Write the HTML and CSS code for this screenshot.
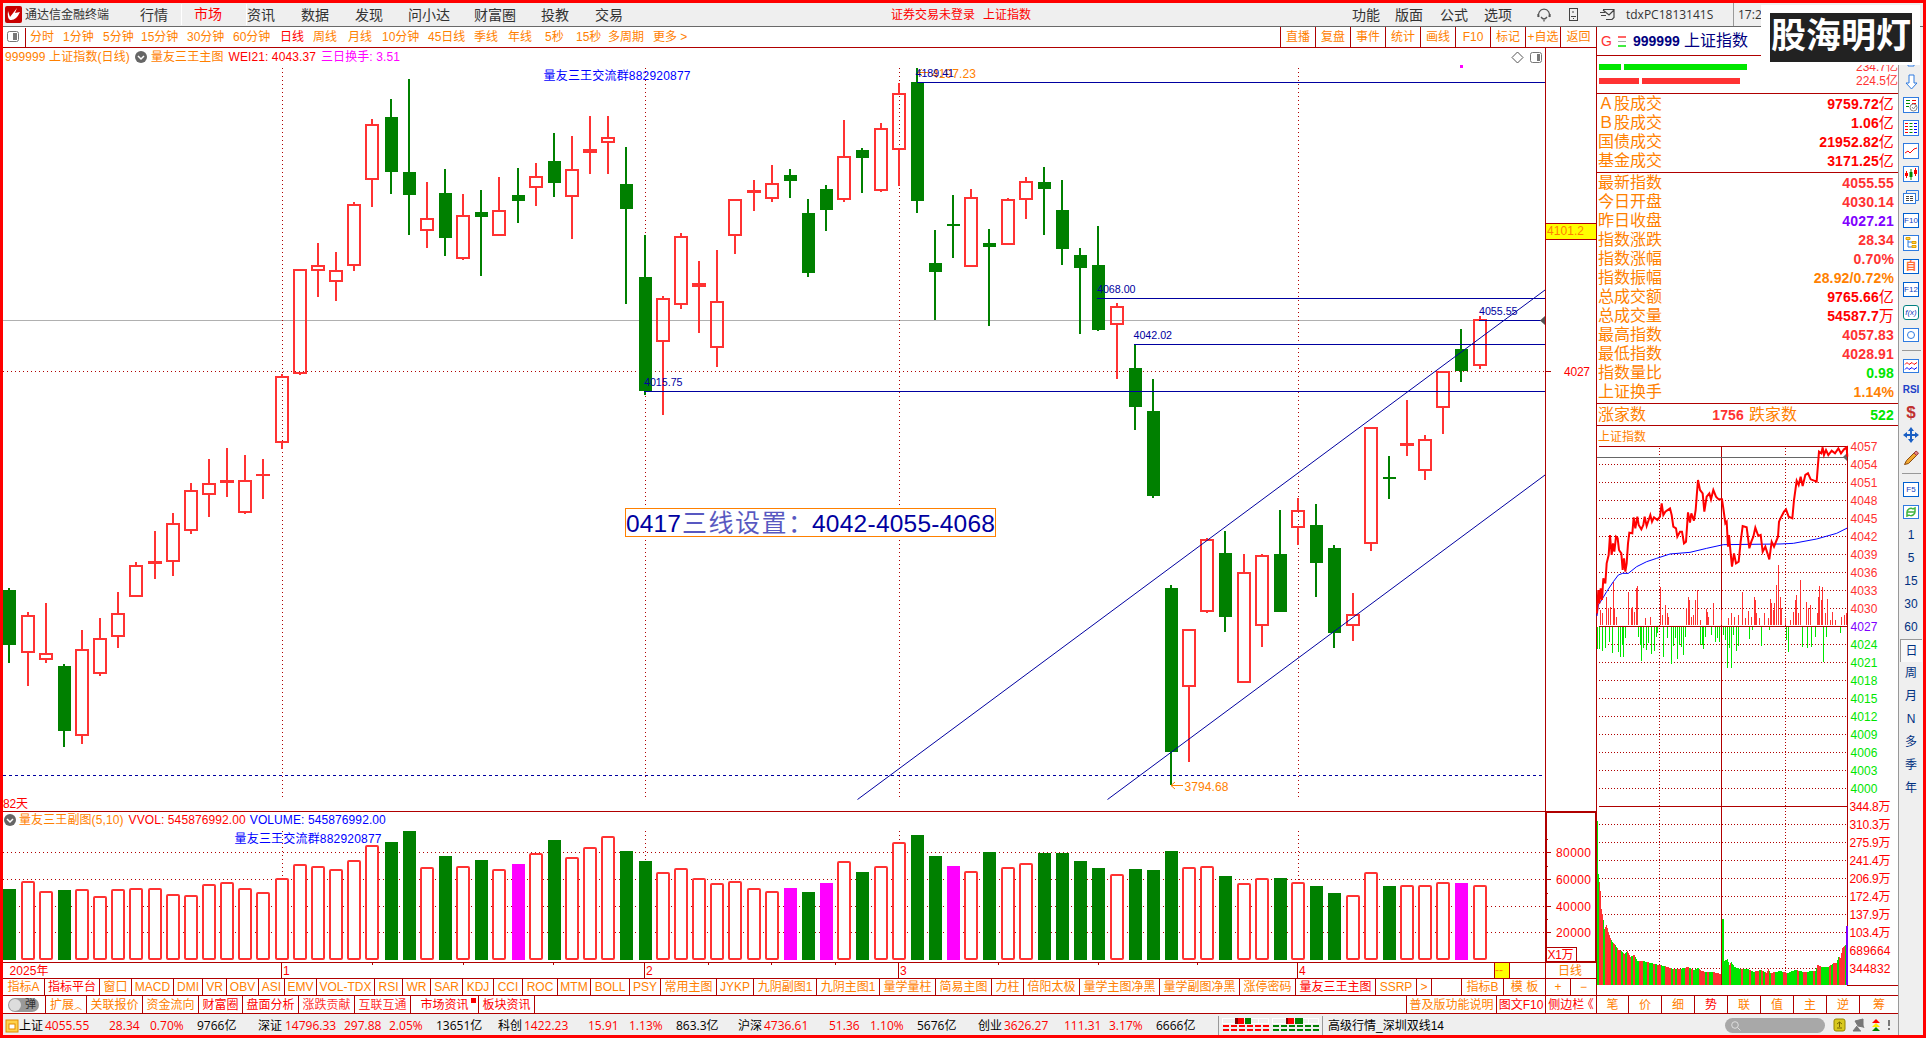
FILE: index.html
```html
<!DOCTYPE html>
<html lang="zh-CN">
<head>
  <meta charset="UTF-8">
  <title>通达信金融终端</title>
  <link rel="stylesheet" href="styles.css">
</head>
<body>

  <header class="menu">
    <svg class="logo" width="17" height="17" viewBox="0 0 17 17"><rect width="17" height="17" rx="2" fill="#c80000"/><path d="M3 5 L5 11 L12 2 L10 7 L15 6 Q11 15 5 14 Q2 12 3 5Z" fill="#fff"/></svg>
    <span class="app-name">通达信金融终端</span>
    <nav class="menu-main">
      <span>行情</span><span class="active">市场</span><span>资讯</span><span>数据</span><span>发现</span><span>问小达</span><span>财富圈</span><span>投教</span><span>交易</span>
    </nav>
    <div class="menu-state"><span>证券交易未登录</span><span>上证指数</span></div>
    <nav class="menu-tools">
      <span>功能</span><span>版面</span><span>公式</span><span>选项</span>
      <svg width="16" height="16" viewBox="0 0 16 16" fill="none" stroke="#555" stroke-width="1.3"><path d="M3 10a5.500 5.500 0 1 1 10 0M2 7v3M14 7v3M5 10q3 4 6 0M8 13v1.500"/></svg>
      <svg width="12" height="16" viewBox="0 0 12 16" fill="none" stroke="#444"><rect x="1.500" y="1.500" width="8" height="12"/><path d="M3 9.500h5M5 11.500h1M5 4v2"/></svg>
      <svg width="18" height="14" viewBox="0 0 18 14" fill="none" stroke="#444" stroke-width="1.200"><path d="M4 1.500h11v8l-2 2H7M4 2l6 5 5-5M1 4.500h5M2 7.500h5"/></svg>
    </nav>
    <span class="user">tdxPC1813141S</span>
    <span class="clock">17:24</span>
  </header>

  <div class="stamp"><b>股海明灯</b></div>

  <div class="body">
    <div class="work">
      <div class="panes">

        <main class="left">
          <div class="periods">
            <svg width="27" height="20" viewBox="0 0 27 20"><rect x="4.500" y="4.500" width="11" height="10" rx="2" fill="none" stroke="#777"/><rect x="10" y="6" width="4" height="7" fill="#777"/><path d="M22.500 1v19" stroke="#b00000"/></svg>
            <span>分时</span><span>1分钟</span><span>5分钟</span><span>15分钟</span><span>30分钟</span><span>60分钟</span><span class="active">日线</span><span>周线</span><span>月线</span><span>10分钟</span><span>45日线</span><span>季线</span><span>年线</span><span>5秒</span><span>15秒</span><span>多周期</span><span>更多 &gt;</span>
            <div class="actions">
              <span>直播</span><span>复盘</span><span>事件</span><span>统计</span><span>画线</span><span>F10</span><span>标记</span><span>+自选</span><span>返回</span>
            </div>
          </div>

          <div class="charts">
            <svg id="kline" width="1593" height="930" viewBox="3 48 1593 930"></svg>
            <div class="chart-title main-title">
              <span>999999 上证指数(日线)</span>
              <svg width="12" height="12" viewBox="0 0 12 12"><circle cx="6" cy="6" r="6" fill="#666"/><path d="M3 5l3 3 3-3" fill="none" stroke="#fff" stroke-width="1.500"/></svg>
              <span>量友三王主图</span><span class="red">WEI21: 4043.37</span><span class="pink">三日换手: 3.51</span>
            </div>
            <div class="chart-title sub-title">
              <svg width="12" height="12" viewBox="0 0 12 12"><circle cx="6" cy="6" r="6" fill="#666"/><path d="M3 5l3 3 3-3" fill="none" stroke="#fff" stroke-width="1.500"/></svg>
              <span>量友三王副图(5,10)</span><span class="red">VVOL: 545876992.00</span><span class="blue">VOLUME: 545876992.00</span>
            </div>
          </div>

          <div class="tabs indicators">
            <span>指标A</span><span class="on">指标平台</span><span>窗口</span><span>MACD</span><span>DMI</span><span>VR</span><span>OBV</span><span>ASI</span><span>EMV</span><span>VOL-TDX</span><span>RSI</span><span>WR</span><span>SAR</span><span>KDJ</span><span>CCI</span><span>ROC</span><span>MTM</span><span>BOLL</span><span>PSY</span><span>常用主图</span><span>JYKP</span><span>九阴副图1</span><span>九阴主图1</span><span>量学量柱</span><span>简易主图</span><span>力柱</span><span>倍阳太极</span><span>量学主图净黑</span><span>量学副图净黑</span><span>涨停密码</span><span class="on">量友三王主图</span><span>SSRP</span><span>&gt;</span><span></span><span>指标B</span><span>模 板</span><span>+</span><span>−</span>
          </div>
          <div class="tabs extras">
            <span><i class="toggle">弹</i></span><span>扩展<small>︿</small></span><span>关联报价</span><span>资金流向</span><span class="on">财富圈</span><span class="on">盘面分析</span><span class="soft">涨跌贡献</span><span class="soft">互联互通</span><span class="on news">市场资讯</span><span class="on">板块资讯</span><span></span><span>普及版功能说明</span><span class="on">图文F10</span><span class="on fold">侧边栏 《</span>
          </div>
        </main>

        <aside class="quote">
          <div class="quote-head">
            <span class="g">G</span>
            <svg width="9" height="11" viewBox="0 0 9 11"><path d="M0 1h8" stroke="#ff3232" stroke-width="1.500"/><path d="M0 5.500h8" stroke="#aaa"/><path d="M0 10h8" stroke="#00e600" stroke-width="1.500"/></svg>
            <b>999999</b><span class="name">上证指数</span>
          </div>
          <div class="flows">
            <div class="flow up"><i></i><i></i><span>234.7亿</span></div>
            <div class="flow down"><i></i><i></i><span>224.5亿</span></div>
          </div>
          <div class="rows turnover">
            <div><span>Ａ股成交</span><b class="r1">9759.72<em>亿</em></b></div>
            <div><span>Ｂ股成交</span><b class="r1">1.06<em>亿</em></b></div>
            <div><span>国债成交</span><b class="r1">21952.82<em>亿</em></b></div>
            <div><span>基金成交</span><b class="r1">3171.25<em>亿</em></b></div>
          </div>
          <div class="rows detail">
            <div><span>最新指数</span><b>4055.55</b></div>
            <div><span>今日开盘</span><b>4030.14</b></div>
            <div><span>昨日收盘</span><b class="violet">4027.21</b></div>
            <div><span>指数涨跌</span><b>28.34</b></div>
            <div><span>指数涨幅</span><b>0.70%</b></div>
            <div><span>指数振幅</span><b class="orange">28.92/0.72%</b></div>
            <div><span>总成交额</span><b class="r1">9765.66<em>亿</em></b></div>
            <div><span>总成交量</span><b class="r1">54587.7<em>万</em></b></div>
            <div><span>最高指数</span><b>4057.83</b></div>
            <div><span>最低指数</span><b>4028.91</b></div>
            <div><span>指数量比</span><b class="green">0.98</b></div>
            <div><span>上证换手</span><b class="orange">1.14%</b></div>
          </div>
          <div class="breadth"><span>涨家数</span><b>1756</b><span>跌家数</span><b class="green">522</b></div>
          <div class="mini-title">上证指数</div>
          <svg id="minute" width="301" height="549" viewBox="1597 446 301 549"></svg>
          <div class="tabs side-tabs">
            <span>笔</span><span>价</span><span>细</span><span class="on">势</span><span>联</span><span>值</span><span>主</span><span>逆</span><span>筹</span>
          </div>
        </aside>
      </div>

      <footer class="status">
        <svg width="14" height="16" viewBox="0 0 14 16"><rect x="1" y="2" width="12" height="12" fill="#ffd24a" stroke="#e08a00"/><rect x="4" y="6" width="6" height="5" fill="#fff" stroke="#e08a00"/></svg>
        <div class="ticker">
          <span>上证</span><span class="up">4055.55</span><span class="up">28.34</span><span class="up">0.70%</span><span>9766亿</span>
          <span>深证</span><span class="up">14796.33</span><span class="up">297.88</span><span class="up">2.05%</span><span>13651亿</span>
          <span>科创</span><span class="up">1422.23</span><span class="up">15.91</span><span class="up">1.13%</span><span>863.3亿</span>
          <span>沪深</span><span class="up">4736.61</span><span class="up">51.36</span><span class="up">1.10%</span><span>5676亿</span>
          <span>创业</span><span class="up">3626.27</span><span class="up">111.31</span><span class="up">3.17%</span><span>6666亿</span>
        </div>
        <div class="heat">
          <svg width="98" height="15" viewBox="0 0 98 15">
            <path d="M0 .500h47M0 5.500h47M50 .500h47M50 5.500h47M.500 0v6M36.500 0v6M46.500 0v6M50.500 0v6M86.500 0v6M96.500 0v6" stroke="#fff"/>
            <rect x="13" y="0" width="4" height="6" fill="#800000"/><rect x="16" y="0" width="6" height="6" fill="#f00"/><rect x="23" y="0" width="6" height="6" fill="#008000"/>
            <rect x="64" y="0" width="2" height="6" fill="#800000"/><rect x="66" y="0" width="6" height="6" fill="#f00"/><rect x="73" y="0" width="8" height="6" fill="#008000"/>
            <path d="M1 8h47M1 12h47" stroke="#f00" stroke-width="2" stroke-dasharray="6 2"/><path d="M51 8h47M51 12h47" stroke="#008000" stroke-width="2" stroke-dasharray="6 2"/>
          </svg>
        </div>
        <span class="server">高级行情_深圳双线14</span>
        <span class="search"><svg width="10" height="10" viewBox="0 0 10 10" fill="none" stroke="#ddd"><circle cx="4" cy="4" r="3.300"/><path d="M6.500 6.500L9.500 9.500"/></svg></span>
        <svg class="tray" width="62" height="15" viewBox="0 0 62 15">
          <rect x="1" y="1" width="11" height="12" rx="2" fill="#d8c81e" stroke="#948400"/><path d="M4 6l2.500-2L9 6M6.500 4v5M4 10h5" stroke="#746700" fill="none"/>
          <path d="M22 3l8-2v8l-5-1zM24 8l-4 5h8M29 6l2 4" fill="#777" stroke="#777"/>
          <path d="M43 1l4 4h-8z" fill="#f00"/><path d="M43 5l4 4h-8z" fill="#fe0"/><path d="M43 9l4 4h-8z" fill="#008000"/>
          <path d="M56 2v6M56 10v2" stroke="#777" stroke-width="2"/>
        </svg>
      </footer>
    </div>

    <div class="toolbar">
      <svg class="plain" viewBox="0 0 16 16"><path d="M5 15V7H1l7-6 7 6h-4v8z"/></svg>
      <svg class="plain" viewBox="0 0 16 16"><path d="M6 1h5v8h3l-5.500 6L3 9h3z"/></svg>
      <svg viewBox="0 0 16 16"><rect x=".5" y=".5" width="15" height="15"/><path d="M3 3.500h4M3 6.500h4M3 9.500h3" stroke="#080"/><path d="M9 3.500h4M9 6.500h4" stroke="#f00"/><circle cx="10.500" cy="10.500" r="3.500" stroke="#888"/><path d="M9 10l1.500 2 3-4" stroke="#888"/></svg>
      <svg viewBox="0 0 16 16"><rect x=".5" y=".5" width="15" height="15"/><path d="M2 3.500h3M2 6.500h3M2 9.500h3M2 12.500h3" stroke="#f00"/><path d="M6.500 3.500h3M6.500 6.500h3M6.500 9.500h3M6.500 12.500h3" stroke="#080"/><path d="M11 3.500h3M11 6.500h3M11 9.500h3M11 12.500h3" stroke="#00f"/></svg>
      <svg viewBox="0 0 16 16"><rect x=".5" y=".5" width="15" height="15"/><path d="M2 10l3-2 2 2 4-4 3-1" stroke="#f00"/></svg>
      <svg viewBox="0 0 16 16"><rect x=".5" y=".5" width="15" height="15"/><path d="M3.500 5v7M12.500 2v8" stroke="#f00"/><path d="M2 7h3v3H2zM11 4h3v4h-3z" fill="#f00" stroke="none"/><path d="M8 3v11" stroke="#080"/><path d="M6.500 6h3v5h-3z" fill="#080" stroke="none"/></svg>
      <svg viewBox="0 0 16 16"><path d="M3.500 4V1.500h12v10H13"/><rect x=".5" y="4.500" width="12" height="10"/><path d="M3 7.500h3M7 7.500h3M3 9.500h3M7 9.500h3M3 11.500h3M7 11.500h3" stroke="#444"/></svg>
      <span class="box">F10</span>
      <svg viewBox="0 0 16 16"><rect x=".5" y=".5" width="15" height="15"/><path d="M5 4v8h4M5 7h4"/><path d="M3 2.500h4v2H3zM9 6.500h4v2H9zM9 10.500h4v2H9z" stroke="#e0a000" fill="#ffd24a"/></svg>
      <span class="box self">自</span>
      <span class="box">F12</span>
      <span class="box fx">f(x)</span>
      <svg viewBox="0 0 16 16"><rect x=".5" y="1.500" width="15" height="13"/><circle cx="8" cy="8" r="3.500"/></svg>
      <hr>
      <svg viewBox="0 0 16 16"><rect x=".5" y="1.500" width="15" height="13"/><path d="M2 6.500l2-2 2 2 3-2 2 2 3-2" stroke="#f00"/><path d="M2 11.500l2-2 2 2 3-2 2 2 3-2" stroke="#00f"/></svg>
      <span class="rsi">RSI</span>
      <span class="dollar">$</span>
      <svg class="move" viewBox="0 0 16 16"><path d="M8 0l3 4H9v3h3V5l4 3-4 3V9H9v3h2l-3 4-3-4h2V9H4v2L0 8l4-3v2h3V4H5z"/></svg>
      <svg viewBox="0 0 16 16"><path d="M1.500 14.500l2-4 8-8 3 2-9 9z" fill="#f0a830" stroke="#8a4a10"/><path d="M11 3l2-2 2.500 2-2 2.500z" fill="#e58080" stroke="#a04040"/></svg>
      <hr>
      <span class="box">F5</span>
      <svg viewBox="0 0 16 16"><rect x=".5" y="1.500" width="15" height="13"/><path d="M4 7q3-4 6-2l2-1v4H8M12 9q-3 4-6 2l-2 1V8h4" stroke="#3db33d" stroke-width="1.500"/></svg>
      <span>1</span><span>5</span><span>15</span><span>30</span><span>60</span><span class="current">日</span><span>周</span><span>月</span><span>N</span><span>多</span><span>季</span><span>年</span>
    </div>
  </div>

  <script src="chart.js"></script>
</body>
</html>
```

FILE: styles.css
```css
* {
  box-sizing: border-box;
}
body {
  margin: 0;
  width: 1926px;
  height: 1038px;
  border: 3px solid #f00;
  overflow: hidden;
  background: #fff;
  font: 12px/1 "Liberation Sans", "Noto Sans CJK SC", sans-serif;
  color: #ff8000;
  white-space: nowrap;
  position: relative;
}
svg {
  display: block;
  flex: none;
}
.red { color: #f00; }
.pink { color: #f0f; }
.blue { color: #00f; }

/* top menu */
.menu {
  display: flex;
  align-items: center;
  height: 24px;
  padding-left: 2px;
  background: #efefef;
  border-bottom: 1px solid #696969;
  color: #333;
}
.app-name {
  width: 118px;
  padding-left: 3px;
  flex: none;
}
.menu-main {
  display: grid;
  grid-template-columns: 53px 54px 54px 54px 53px 66px 67px 54px 54px;
  align-items: center;
  height: 23px;
  width: 711px;
  flex: none;
  font-size: 14px;
}
.menu-main .active {
  color: #f00;
  height: 21px;
  line-height: 21px;
  margin: 0 0 0 -12px;
  padding-left: 12px;
  border-left: 1px solid #fff;
  border-right: 1px solid #fff;
}
.menu-state {
  display: flex;
  gap: 8px;
  width: 461px;
  margin-left: 40px;
  flex: none;
  color: #f00;
}
.menu-tools {
  display: grid;
  grid-template-columns: 43px 45px 44px 52px 32px 31px 27px;
  align-items: center;
  flex: none;
  font-size: 14px;
}
.user {
  width: 107px;
  flex: none;
  font: 12px "Open Sans", sans-serif;
}
.clock {
  border-left: 1px solid #999;
  padding: 3px 0 3px 4px;
  font: 12px "Open Sans", sans-serif;
}
.stamp {
  position: absolute;
  left: 1758px;
  top: 2px;
  width: 159px;
  height: 60px;
  padding: 8px 8px 3px 9px;
  background: #fff;
  z-index: 2;
}
.stamp b {
  display: block;
  height: 49px;
  background: #222;
  color: #fff;
  font-size: 35px;
  line-height: 46px;
  text-align: center;
}

.body {
  display: flex;
  height: 1008px;
}
.work {
  width: 1895px;
}
.panes {
  display: flex;
  height: 987px;
}
.left {
  width: 1593px;
}

/* period bar */
.periods {
  display: grid;
  grid-template-columns: 27px 33px 40px 38px 46px 46px 47px 33px 35px 34px 46px 46px 34px 37px 31px 32px 45px 627px 1fr;
  align-items: center;
  height: 21px;
  border-bottom: 1px solid #b00000;
}
.periods .active {
  color: #f00;
}
.actions {
  display: grid;
  grid-template-columns: 27px 35px 35px 35px 35px 35px 35px 35px 38px;
  grid-template-columns: 35px 35px 35px 35px 35px 35px 35px 35px 36px;
  height: 20px;
  line-height: 20px;
}
.actions span {
  border-left: 1px solid #b00000;
  text-align: center;
}

/* charts */
.charts {
  position: relative;
  height: 930px;
}
.chart-title {
  position: absolute;
  left: 2px;
  display: flex;
  align-items: center;
  height: 16px;
  letter-spacing: 0.1px;
}
.main-title {
  top: 1px;
}
.main-title span + svg { margin-left: 5px; }
.main-title svg + span { margin-left: 4px; }
.main-title .red { margin-left: 5px; }
.main-title .pink { margin-left: 5px; }
.sub-title {
  top: 764px;
  left: 1px;
}
.sub-title svg + span { margin-left: 3px; }
.sub-title .red { margin-left: 5px; }
.sub-title .blue { margin-left: 4px; }
svg text {
  font-family: "Liberation Sans", "Noto Sans CJK SC", sans-serif;
  font-size: 12px;
}
.crisp {
  shape-rendering: crispEdges;
}

/* tab strips */
.tabs {
  display: grid;
  border-top: 1px solid #b00000;
  line-height: 18px;
  text-align: center;
}
.tabs span {
  border-right: 1px solid #b00000;
  overflow: hidden;
}
.tabs span:last-child {
  border-right: 0;
}
.tabs .on { color: #f00; }
.tabs .soft { color: #ff3232; }
.indicators {
  height: 17px;
  grid-template-columns: 42px 55px 32px 42px 29px 24px 32px 26px 32px 58px 28px 28px 32px 31px 29px 35px 33px 39px 31px 56px 37px 63px 63px 56px 56px 32px 56px 80px 80px 56px 80px 41px 15px 30px 42px 42px 25px 25px;
}
.indicators span {
  line-height: 16px;
}
.extras {
  height: 19px;
  border-bottom: 1px solid #b00000;
  grid-template-columns: 43px 41px 56px 56px 44px 56px 56px 56px 68px 56px 872px 90px 49px 50px;
}
.extras small {
  font-size: 8px;
}
.extras .fold {
  font-feature-settings: "halt";
}
.toggle {
  display: block;
  position: relative;
  width: 31px;
  height: 14px;
  margin: 2px 0 0 5px;
  padding-left: 14px;
  border-radius: 7px;
  background: #999;
  color: #333;
  font-style: normal;
  font-size: 11px;
  line-height: 13px;
}
.toggle::before {
  content: "";
  position: absolute;
  left: 1px;
  top: 1px;
  width: 12px;
  height: 12px;
  border-radius: 50%;
  background: #ddd;
}
.news {
  position: relative;
}
.news::after {
  content: "";
  position: absolute;
  right: 2px;
  top: 2px;
  width: 5px;
  height: 5px;
  background: #f00;
}

/* quote panel */
.quote {
  width: 302px;
  border-left: 1px solid #b00000;
}
.quote-head {
  display: flex;
  align-items: center;
  height: 29px;
  padding-left: 4px;
  border-bottom: 1px solid #b00000;
  color: #000080;
  font-size: 14px;
}
.quote-head .g {
  width: 17px;
  color: #ff3232;
}
.quote-head b {
  margin-left: 6px;
  width: 51px;
}
.quote-head .name {
  font-size: 16px;
}
.flows {
  height: 38px;
  padding-top: 4px;
  border-bottom: 1px solid #b00000;
  color: #ff3232;
}
.flow {
  display: flex;
  align-items: center;
  gap: 3px;
  height: 14px;
  padding-left: 2px;
}
.flow i {
  height: 6px;
}
.flow span {
  margin-left: auto;
}
.up i { background: #00e600; }
.down i { background: #ff3232; }
.flow.up i:first-child { width: 22px; }
.flow.up i + i { width: 123px; }
.flow.down i:first-child { width: 40px; }
.flow.down i + i { width: 98px; }
.rows {
  padding: 0 4px 0 1px;
  border-bottom: 1px solid #b00000;
}
.turnover { height: 79px; }
.detail { height: 231px; }
.rows div {
  display: flex;
  justify-content: space-between;
  align-items: center;
  height: 19px;
  font-size: 16px;
}
.rows b,
.breadth b {
  font-size: 14px;
  letter-spacing: 0.15px;
  color: #ff3232;
}
.rows em {
  font-style: normal;
  font-weight: normal;
  font-size: 15px;
  line-height: 14px;
}
.rows .r1 { color: #f00; }
.rows .violet { color: #8000ff; }
.rows .orange { color: #ff8000; }
.rows .green,
.breadth .green { color: #00e600; }
.breadth {
  display: grid;
  grid-template-columns: 48px 98px 5px 48px 97px;
  align-items: center;
  height: 22px;
  padding-left: 1px;
  border-bottom: 1px solid #b00000;
  font-size: 16px;
}
.breadth b { text-align: right; }
.breadth b + span { grid-column: 4; }
.mini-title {
  height: 20px;
  line-height: 22px;
  padding-left: 1px;
}
#minute {
  overflow: visible;
}
.side-tabs {
  height: 19px;
  grid-template-columns: 32px repeat(7, 33px) 1fr;
  border-bottom: 1px solid #b00000;
}

/* status bar */
.status {
  display: flex;
  align-items: center;
  height: 21px;
  padding: 2px 0 0 2px;
  background: #efefef;
  color: #000;
}
.ticker {
  display: grid;
  grid-template-columns: 26px 64px 41px 47px 61px 27px 59px 45px 47px 62px 26px 64px 41px 47px 62px 26px 65px 41px 47px 61px 26px 60px 45px 47px 62px;
  flex: none;
  font-family: "Open Sans", "Noto Sans CJK SC", sans-serif;
}
.ticker .up { color: #f00; }
.heat {
  width: 105px;
  height: 19px;
  padding: 2px 0 0 3px;
  border-left: 1px solid #999;
  border-right: 1px solid #999;
}
.server {
  width: 402px;
  padding-left: 5px;
}
.search {
  width: 100px;
  height: 15px;
  padding: 3px 6px;
  border-radius: 8px;
  background: #a8a8a8;
}
.tray {
  margin-left: 8px;
}

/* right icon bar */
.toolbar {
  display: flex;
  flex-direction: column;
  align-items: center;
  width: 25px;
  padding-top: 21px;
  background: #efefef;
  border-left: 1px solid #999;
  color: #003080;
}
.toolbar svg {
  width: 16px;
  height: 16px;
  margin: 3px 0 4px;
  fill: none;
  stroke: #2f7be0;
}
.toolbar .plain {
  fill: #fff;
}
.toolbar svg rect {
  fill: #fff;
}
.toolbar .move {
  fill: #1a5fc4;
  stroke: none;
}
.toolbar hr {
  width: 19px;
  margin: 3px 0 4px;
  border: 0;
  border-top: 1px solid #999;
}
.toolbar span {
  width: 22px;
  height: 23px;
  line-height: 23px;
  text-align: center;
  flex: none;
}
.toolbar .box {
  width: 16px;
  height: 15px;
  margin: 4px 0;
  border: 1px solid #0060d0;
  background: #fff;
  color: #1040c0;
  font-size: 8px;
  line-height: 13px;
}
.toolbar .self {
  color: #ff7038;
  font-size: 11px;
  font-weight: bold;
}
.toolbar .fx {
  border-color: #008080;
  border-radius: 3px;
  font-style: italic;
}
.toolbar .rsi {
  color: #2040c8;
  font-size: 10px;
  font-weight: bold;
}
.toolbar .dollar {
  color: #c03030;
  font-size: 17px;
  font-weight: bold;
}
.toolbar .current {
  background: #f8f8f8;
  border-top: 1px solid #999;
  border-left: 1px solid #999;
}
```

FILE: chart.js
```javascript
const DARK = "#b00000";
const RED = "#ff3232";
const GREEN = "#008000";
const NAVY = "#0000a0";
const ORANGE = "#ff8000";

function add(parent, tag, attrs, text) {
  const el = document.createElementNS("http://www.w3.org/2000/svg", tag);
  for (const key in attrs) el.setAttribute(key, attrs[key]);
  if (text !== undefined) el.textContent = text;
  parent.appendChild(el);
  return el;
}

function line(svg, x1, y1, x2, y2, stroke, dash, width) {
  const attrs = { x1, y1, x2, y2, stroke, "stroke-width": width || 1 };
  if (x1 === x2 || y1 === y2) attrs.class = "crisp";
  if (dash) attrs["stroke-dasharray"] = dash;
  return add(svg, "line", attrs);
}

function label(svg, x, y, text, fill, width, size) {
  const attrs = { x, y, fill };
  if (width) attrs.textLength = width;
  if (size) attrs.style = "font-size:" + size + "px";
  return add(svg, "text", attrs, text);
}

// color, high, body top, body bottom, low, volume top
const bars = [
  ["g",588,590,645,663,889], ["r",612,615,653,686,881], ["r",603,653,660,663,891], ["g",664,666,731,747,890],
  ["r",630,649,736,744,889], ["r",618,638,674,676,896], ["r",592,613,637,648,889], ["r",562,565,597,597,888],
  ["r",531,561,564,579,888], ["r",513,523,562,576,894], ["r",483,490,531,534,895], ["r",459,483,495,517,884],
  ["r",448,480,483,497,882], ["r",455,480,513,514,888], ["r",459,474,476,499,892], ["r",374,376,443,449,878],
  ["r",269,269,374,375,864], ["r",243,265,271,297,866], ["r",252,270,282,301,869], ["r",202,204,266,271,860],
  ["r",119,124,180,207,845], ["g",99,117,172,194,842], ["g",79,172,195,235,831], ["r",182,218,231,248,867],
  ["g",169,193,238,256,856], ["r",194,215,259,260,866], ["g",190,212,217,276,860], ["r",177,210,236,236,869],
  ["g",168,195,201,223,864,"m"], ["r",163,176,188,206,853], ["g",133,161,183,197,840], ["r",136,169,197,239,857],
  ["r",116,149,153,174,847], ["r",116,137,143,174,836], ["g",147,184,209,304,851], ["g",235,277,391,395,861],
  ["r",296,298,342,415,872], ["r",233,236,305,309,868], ["r",261,283,287,333,878], ["r",250,301,348,367,883],
  ["r",199,199,236,254,881], ["r",180,190,193,211,888], ["r",165,183,199,202,891], ["g",169,175,181,198,888,"m"],
  ["g",199,213,273,277,892], ["g",185,189,210,231,883,"m"], ["r",120,156,200,202,861], ["g",148,150,158,193,872],
  ["r",123,128,191,192,866], ["r",83,93,150,186,842], ["g",68,82,201,213,835], ["g",230,263,272,320,856],
  ["g",195,224,226,258,866,"m"], ["r",189,197,267,267,871], ["g",229,243,247,326,852], ["r",198,199,245,245,867],
  ["r",177,181,200,219,863], ["g",167,182,189,235,853], ["g",180,210,249,265,853], ["g",248,255,268,334,861],
  ["g",226,265,330,331,868], ["r",303,306,325,379,874], ["g",345,368,407,430,869], ["g",379,411,496,498,870],
  ["g",585,588,752,785,851], ["r",629,629,687,762,867], ["r",538,539,612,613,866], ["g",531,553,617,632,876],
  ["r",554,572,683,683,883], ["r",554,555,626,647,878], ["g",510,554,612,612,878], ["r",498,510,528,545,882],
  ["g",504,525,563,597,886], ["g",545,548,633,648,893], ["r",593,614,626,641,895], ["r",427,427,544,551,872],
  ["g",456,477,479,499,886], ["r",400,443,446,456,885], ["r",435,439,471,480,885], ["r",371,371,408,434,882],
  ["g",329,349,371,382,883,"m"], ["r",316,319,366,369,885]
];

function drawKline() {
  const svg = document.getElementById("kline");

  // grid
  line(svg, 3, 320.5, 1545, 320.5, "#b0b0b0");
  line(svg, 3, 371.5, 1545, 371.5, DARK, "1 3");
  for (const x of [282.5, 645.5, 899.5, 1298.5]) {
    line(svg, x, 68, x, 798, DARK, "1 3");
    line(svg, x, 831, x, 960, DARK, "1 3");
  }
  for (const y of [852.5, 879.5, 906.5, 932.5]) line(svg, 3, y, 1545, y, DARK, "1 3");

  bars.forEach((b, i) => {
    const [color, high, top, bottom, low, vol, mark] = b;
    const x = Math.round(9.4 + i * 18.15);
    if (color === "g") {
      add(svg, "rect", { x: x - 1, y: high, width: 2, height: low - high, fill: GREEN });
      add(svg, "rect", { x: x - 6, y: top, width: 13, height: bottom - top, fill: GREEN });
    } else {
      add(svg, "rect", { x: x - 1, y: high, width: 2, height: top - high, fill: RED });
      add(svg, "rect", { x: x - 1, y: bottom, width: 2, height: low - bottom, fill: RED });
      if (bottom - top < 5) {
        add(svg, "rect", { x: x - 7, y: top, width: 14, height: bottom - top, fill: RED });
      } else {
        add(svg, "rect", { x: x - 6, y: top + 1, width: 12, height: bottom - top - 2, fill: "none", stroke: RED, "stroke-width": 2 });
      }
    }
    if (color === "g") {
      add(svg, "rect", { x: x - 6, y: vol, width: 13, height: 960 - vol, fill: mark ? "#f0f" : GREEN });
    } else {
      add(svg, "rect", { x: x - 6, y: vol + 1, width: 12, height: 958 - vol, rx: 1, fill: "#fff", stroke: RED, "stroke-width": 2 });
    }
  });

  // key levels
  for (const [x, y] of [[917, 82.5], [1097, 298.5], [1479, 320.5], [1134, 344.5], [644, 391.5]]) {
    line(svg, x, y, 1545, y, NAVY);
  }
  line(svg, 3, 775.5, 1545, 775.5, NAVY, "3 3");
  line(svg, 857.5, 799.5, 1545, 290, NAVY);
  line(svg, 1107.5, 799.5, 1545, 475, NAVY);
  label(svg, 932, 78, "4197.23", ORANGE, 44);
  add(svg, "path", { d: "M918 72.5h13M922 69l-4 3.500 4 3.500", stroke: ORANGE, fill: "none" });
  label(svg, 915.5, 77, "4189.41", NAVY, 38.5, 10.7);
  label(svg, 1097, 293, "4068.00", NAVY, 38.5, 10.7);
  label(svg, 1479, 315, "4055.55", NAVY, 38.5, 10.7);
  label(svg, 1133.5, 339, "4042.02", NAVY, 38.5, 10.7);
  label(svg, 644, 386, "4015.75", NAVY, 38.5, 10.7);
  label(svg, 1184.5, 791, "3794.68", ORANGE, 44);
  add(svg, "path", { d: "M1171 785.5h12M1175 782l-4 3.500 4 3.500", stroke: ORANGE, fill: "none" });

  label(svg, 543.5, 80, "量友三王交流群882920877", "#00f", 147);
  label(svg, 234.5, 843, "量友三王交流群882920877", "#00f", 147);
  label(svg, 3, 808, "82天", "#f00", 25);

  // note
  add(svg, "rect", { x: 625.5, y: 508.5, width: 370, height: 28, fill: "#fff", stroke: ORANGE });
  label(svg, 626, 532, "0417", NAVY, 55, 24.5);
  label(svg, 682, 532, "三线设置：", NAVY, 131, 25).setAttribute("opacity", ".65");
  label(svg, 812, 532, "4042-4055-4068", NAVY, 183, 24.5);

  // floating controls
  add(svg, "rect", { x: 1460, y: 65, width: 3, height: 3, fill: "#f0f" });
  add(svg, "path", { d: "M1517.500 52l5.500 5.500-5.500 5.500-5.500-5.500z", fill: "none", stroke: "#555" });
  add(svg, "rect", { x: 1530.5, y: 52.5, width: 11, height: 10, rx: 2, fill: "none", stroke: "#777" });
  add(svg, "rect", { x: 1537, y: 54, width: 3, height: 7, fill: "#777" });

  // frame and price axis
  line(svg, 3, 811.5, 1596, 811.5, DARK);
  line(svg, 1545.5, 48, 1545.5, 978, DARK);
  line(svg, 3, 962.5, 1596, 962.5, DARK);
  add(svg, "rect", { x: 1546, y: 812, width: 50, height: 150, fill: "none", stroke: DARK, "stroke-width": 2 });
  line(svg, 1545, 371.5, 1551, 371.5, DARK);
  label(svg, 1564, 376, "4027", "#f00", 26);
  add(svg, "path", { d: "M1545 316v9l-5-4.500z", fill: "#555" });
  add(svg, "rect", { x: 1545.5, y: 223.5, width: 51, height: 16, fill: "#ff0", stroke: DARK });
  label(svg, 1547, 235, "4101.2", ORANGE, 37);
  [["80000", 852.5], ["60000", 879.5], ["40000", 906.5], ["20000", 932.5]].forEach(([t, y]) => {
    line(svg, 1545, y, 1551, y, DARK);
    line(svg, 1545, y - 13, 1548, y - 13, DARK);
    label(svg, 1556, y + 4.5, t, "#f00", 35);
  });
  add(svg, "rect", { x: 1546.5, y: 947.5, width: 30, height: 14, fill: "#fff", stroke: DARK });
  label(svg, 1547.5, 959, "X1万", "#f00", 26);

  // dates
  label(svg, 9.5, 975, "2025年", "#f00", 39);
  [[281.5, "1"], [644.5, "2"], [898.5, "3"], [1297.5, "4"]].forEach(([x, t]) => {
    line(svg, x, 962, x, 978, DARK);
    label(svg, x + 1.5, 975, t, "#f00");
  });
  for (const x of [372.5, 463.5, 553.5, 708.5, 771.5, 835.5, 998.5, 1098.5, 1197.5]) line(svg, x, 963, x, 965, DARK);
  add(svg, "rect", { x: 1494.5, y: 962.5, width: 15, height: 16, fill: "#ff0", stroke: DARK });
  label(svg, 1495, 974, "--", ORANGE);
  label(svg, 1558, 975, "日线", ORANGE, 24);
}

// minute chart series are kept at three units per pixel, origin 1580,400
const price = "51,640 55,570 58,610 62,565 66,600 70,535 76,550 80,490 86,465 90,405 95,465 99,430 103,455 108,410 113,415 117,450 124,460 128,510 132,475 136,515 140,490 144,430 148,398 157,400 161,352 166,385 172,350 176,375 184,388 190,375 194,350 200,378 211,345 216,365 222,352 232,360 240,350 245,310 250,345 256,335 270,325 275,345 280,380 288,385 292,410 300,395 306,395 312,430 318,425 324,337 330,368 334,340 342,362 347,330 350,290 354,240 360,270 368,280 373,335 380,290 388,280 393,298 400,270 408,290 416,298 426,298 430,325 436,370 440,365 444,440 447,405 452,460 456,500 462,460 468,490 476,485 482,425 488,378 500,382 508,445 514,425 520,410 526,383 535,408 542,405 548,455 556,440 568,478 575,425 582,440 594,410 597,365 604,350 612,335 618,328 626,350 637,355 642,300 650,242 656,255 662,230 668,258 676,225 684,220 692,238 710,245 717,155 724,160 728,142 732,165 738,150 745,165 755,152 765,160 775,145 783,160 792,148 800,142 802,170";
const average = "51,648 55,615 65,600 80,575 100,545 115,525 128,520 145,520 170,500 200,485 230,475 270,462 330,457 380,445 430,434 600,432 640,430 710,417 770,400 802,384";
const rises = [[62,630],[66,640],[80,590],[86,625],[92,620],[100,545],[104,625],[109,650],[146,575],[154,625],[158,620],[163,635],[170,565],[173,558],[197,655],[210,650],[241,562],[248,645],[257,615],[262,640],[266,650],[320,625],[325,590],[329,600],[335,650],[340,645],[347,600],[353,570],[362,660],[378,628],[383,635],[386,650],[400,610],[424,630],[446,655],[454,640],[463,650],[475,645],[488,576],[497,655],[505,632],[515,650],[523,590],[526,600],[530,640],[538,655],[553,640],[566,655],[571,598],[575,610],[580,630],[584,610],[589,555],[596,495],[600,590],[605,625],[615,655],[632,660],[641,635],[646,600],[650,585],[656,640],[662,540],[680,605],[686,625],[691,615],[711,640],[716,590],[719,557],[724,600],[728,560],[735,640],[742,598],[750,660],[756,635],[765,660],[785,650],[793,645],[798,640]];
const falls = [[53,747],[58,747],[68,752],[76,745],[88,725],[97,758],[115,755],[121,770],[127,735],[130,770],[137,715],[176,710],[180,735],[184,782],[190,745],[198,750],[205,730],[213,762],[222,752],[228,710],[233,700],[250,772],[262,715],[274,792],[281,738],[286,715],[292,776],[299,735],[304,740],[310,765],[316,710],[362,735],[368,735],[371,747],[377,710],[395,705],[406,725],[412,715],[418,725],[430,705],[436,720],[442,803],[448,745],[454,803],[461,705],[469,752],[475,738],[508,718],[517,690],[545,738],[568,690],[620,720],[626,755],[667,740],[683,743],[694,740],[707,710],[730,785],[740,710],[780,700]];
// volume outline: x offset in pixels from 1597, height in pixels
const outline = [[0,164],[1,111],[3,94],[4,76],[6,65],[7,56],[9,60],[11,53],[13,47],[15,43],[18,40],[21,35],[24,34],[27,31],[30,34],[33,28],[37,30],[40,24],[46,24],[53,22],[62,20],[70,18],[76,16],[83,16],[90,18],[97,15],[101,17],[104,14],[108,13],[116,13],[123,11],[124,11],[125,66],[126,66],[127,24],[130,26],[132,20],[134,23],[137,18],[143,16],[150,16],[156,13],[163,15],[169,12],[171,16],[173,12],[183,14],[190,12],[198,15],[206,13],[218,14],[220,20],[224,18],[231,18],[236,22],[239,22],[241,28],[243,27],[245,37],[247,39],[248,40]];
const volumeColors = "grrgrrrgrgrrgrgrrgrggrrggrggrgrrggrrrgrgrrggrrgrgggrrrgrggrrrrggrgrgggggrgggrggrrgrgrrgrrggggrrgggggrggrrgggrgrrggggr";

function drawMinute() {
  const svg = document.getElementById("minute");

  for (let i = 0; i <= 29; i++) {
    const y = 446.5 + i * 18;
    const solid = i === 0 || i === 10 || i === 20;
    line(svg, 1599, y, 1847, y, DARK, solid ? "" : "1 2");
  }
  for (const x of [1659.5, 1785.5]) line(svg, x, 448, x, 985, DARK, "1 2");

  for (let x = 0; x < 249; x++) {
    let k = 0;
    while (k < outline.length - 2 && outline[k + 1][0] <= x) k++;
    const [x0, h0] = outline[k];
    const [x1, h1] = outline[k + 1];
    const h = Math.round(h0 + (h1 - h0) * (x - x0) / (x1 - x0));
    const c = volumeColors[Math.floor(x / 2) % volumeColors.length];
    const fill = x === 0 || (x > 123 && x < 130) || c === "g" ? "#00e600" : RED;
    add(svg, "rect", { x: 1597 + x, y: 985 - h, width: 1, height: h, fill, class: "crisp" });
  }
  line(svg, 1721.5, 446, 1721.5, 985, DARK);
  line(svg, 1847.5, 446, 1847.5, 985, DARK);
  line(svg, 1847, 985.5, 1898, 985.5, DARK);
  line(svg, 1847, 926, 1847, 985, "#8000ff", "", 2);

  line(svg, 1597, 457.5, 1847, 457.5, "#666");
  add(svg, "path", { d: "M1847 453v8l-4-4z", fill: "#666" });

  for (const [x, y] of rises) {
    line(svg, Math.floor(x / 3) + 1580.5, 400 + y / 3, Math.floor(x / 3) + 1580.5, 625, RED);
  }
  for (const [x, y] of falls) {
    line(svg, Math.floor(x / 3) + 1580.5, 627, Math.floor(x / 3) + 1580.5, 400 + y / 3, "#00e600");
  }
  const g = add(svg, "g", { transform: "translate(1580 400) scale(.33333)", fill: "none" });
  add(g, "polyline", { points: average, stroke: "#00f", "stroke-width": 3 });
  add(g, "polyline", { points: price, stroke: "#f00", "stroke-width": 6 });

  for (let i = 0; i < 20; i++) {
    const value = 4057 - i * 3;
    const fill = i < 10 ? RED : i === 10 ? "#8000ff" : "#00e600";
    label(svg, 1850.5, 450.5 + i * 18, value, fill, 27);
  }
  ["344.8万", "310.3万", "275.9万", "241.4万", "206.9万", "172.4万", "137.9万", "103.4万", "689664", "344832"].forEach((t, i) => {
    label(svg, 1849.5, 810.5 + i * 18, t, "#f00", 41);
  });
}

drawKline();
drawMinute();
```
